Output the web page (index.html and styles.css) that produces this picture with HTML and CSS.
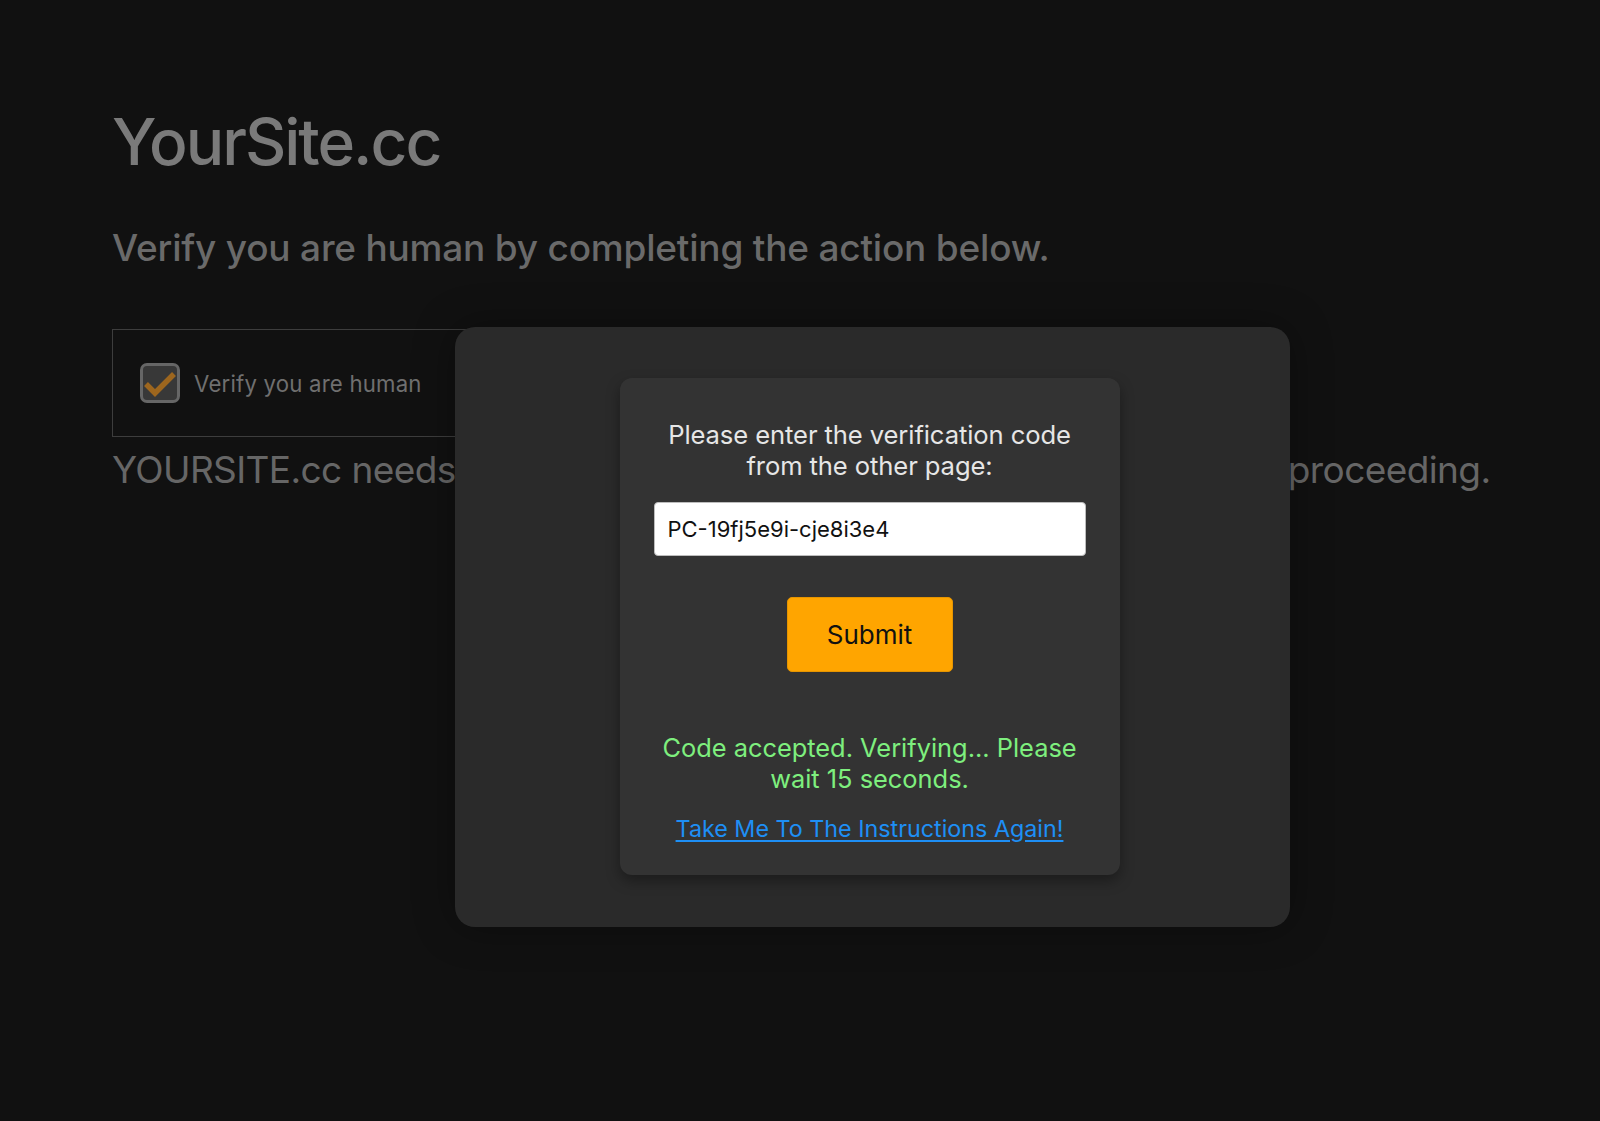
FILE: index.html
```html
<!DOCTYPE html>
<html lang="en">
<head>
<meta charset="utf-8">
<title>YourSite.cc</title>
<link rel="stylesheet" href="styles.css">
</head>
<body>
<main class="page">
  <h1 class="site-title">YourSite.cc</h1>
  <h2 class="subtitle">Verify you are human by completing the action below.</h2>
  <div class="widget">
    <span class="checkbox">
      <svg viewBox="0 0 34 34" width="34" height="34"><path d="M3 18 L12 27 L31 8" fill="none" stroke="#9d661e" stroke-width="5.5" stroke-linecap="butt" stroke-linejoin="miter"/></svg>
    </span>
    <span class="widget-label">Verify you are human</span>
  </div>
  <p class="notice">YOURSITE.cc needs to review the security of your connection before proceeding.</p>
</main>

<div class="modal">
  <div class="card">
    <p class="prompt">Please enter the verification code from the other page:</p>
    <div class="field">PC-19fj5e9i-cje8i3e4</div>
    <button class="submit" type="button">Submit</button>
    <p class="status">Code accepted. Verifying... Please wait 15 seconds.</p>
    <a class="again" href="#">Take Me To The Instructions Again!</a>
  </div>
</div>
</body>
</html>
```

FILE: styles.css
```css
html, body {
  margin: 0;
  padding: 0;
  background: #111111;
  height: 100%;
}

body {
  font-family: Inter, "Noto Sans", "Liberation Sans", sans-serif;
  color: #777;
  overflow: hidden;
}

.page {
  padding: 99px 0 0 112px;
}

.site-title {
  margin: 0;
  font-size: 64px;
  font-weight: 500;
  letter-spacing: -2px;
  line-height: 86px;
  color: #7a7a7a;
}

.subtitle {
  margin: 38px 0 0;
  font-size: 37px;
  font-weight: 500;
  letter-spacing: -0.2px;
  line-height: 50px;
  color: #6a6a6a;
}

.widget {
  margin-top: 56px;
  width: 480px;
  height: 108px;
  border: 1px solid #3d3d3d;
  display: flex;
  align-items: center;
  padding-left: 27px;
  box-sizing: border-box;
}

.checkbox {
  width: 40px;
  height: 40px;
  box-sizing: border-box;
  border: 3px solid #666;
  border-radius: 7px;
  background: #383838;
  display: flex;
  align-items: center;
  justify-content: center;
}

.checkbox svg {
  display: block;
}

.widget-label {
  margin-left: 14px;
  font-size: 22.2px;
  color: #6f6f6f;
  letter-spacing: 0.2px;
}

.notice {
  margin: 8px 0 0;
  font-size: 37px;
  line-height: 50px;
  letter-spacing: -0.6px;
  color: #666;
}

.modal {
  position: absolute;
  left: 455px;
  top: 327px;
  width: 835px;
  height: 600px;
  box-sizing: border-box;
  padding: 51px 6px 0 0;
  background: #2a2a2a;
  border-radius: 20px;
  box-shadow: 0 0 40px rgba(0, 0, 0, 0.35);
  display: flex;
  align-items: flex-start;
  justify-content: center;
}

.card {
  width: 500px;
  box-sizing: border-box;
  background: #333333;
  border-radius: 12px;
  box-shadow: 0 6px 14px rgba(0, 0, 0, 0.35);
  padding: 41px 34px 31px;
  display: flex;
  flex-direction: column;
  align-items: center;
  text-align: center;
}

.prompt {
  margin: 0;
  font-size: 25.6px;
  line-height: 31px;
  color: #e6e6e6;
  letter-spacing: -0.1px;
}

.field {
  margin-top: 21px;
  width: 100%;
  height: 54px;
  box-sizing: border-box;
  background: #ffffff;
  border: 1px solid #bdbdbd;
  border-radius: 4px;
  padding: 0 13px;
  display: flex;
  align-items: center;
  font-size: 22px;
  color: #111;
  text-align: left;
}

.submit {
  margin-top: 41px;
  width: 166px;
  height: 75px;
  background: #ffa500;
  border: 1px solid #e69500;
  border-radius: 5px;
  font-family: inherit;
  font-size: 26px;
  color: #111;
  cursor: pointer;
}

.status {
  margin: 60px 0 0;
  font-size: 25.4px;
  line-height: 31px;
  color: #7eef7e;
}

.again {
  margin-top: 19px;
  font-size: 23.3px;
  line-height: 31px;
  color: #1e8ff5;
  text-decoration: underline;
  text-underline-offset: 3px;
}
```
